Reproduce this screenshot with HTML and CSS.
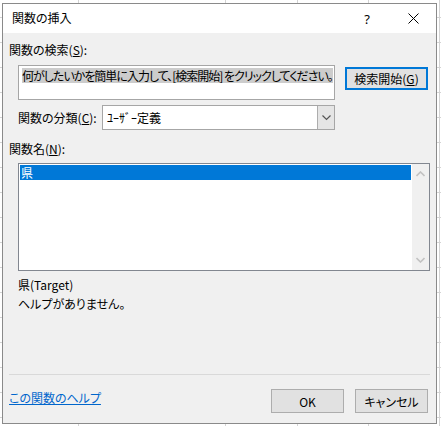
FILE: index.html
```html
<!DOCTYPE html>
<html lang="ja">
<head>
<meta charset="utf-8">
<title>関数の挿入</title>
<link rel="stylesheet" href="styles.css">
</head>
<body>
<div class="dialog">
  <div class="titlebar">
    <span class="title">関数の挿入</span>
    <span class="caption-btn help">?</span>
    <span class="caption-btn close">
      <svg width="11" height="11" viewBox="0 0 11 11"><path d="M0.5 0.5 L10.5 10.5 M10.5 0.5 L0.5 10.5" stroke="#000" stroke-width="1" fill="none"/></svg>
    </span>
  </div>
  <div class="body">
    <div class="label top-label">関数の検索(<u>S</u>):</div>
    <div class="search-row">
      <div class="search-box"><span class="sel">何がしたいかを簡単に入力して、[検索開始] をクリックしてください。</span></div>
      <button class="btn btn-default">検索開始(<u>G</u>)</button>
    </div>
    <div class="cat-row">
      <span class="cat-label">関数の分類(<u>C</u>):</span>
      <div class="select">
        <span class="select-value">ﾕｰｻﾞｰ定義</span>
        <span class="select-btn">
          <svg width="9" height="6" viewBox="0 0 9 6"><path d="M0.5 0.5 L4.5 4.5 L8.5 0.5" stroke="#555" stroke-width="1.2" fill="none"/></svg>
        </span>
      </div>
    </div>
    <div class="label name-label">関数名(<u>N</u>):</div>
    <div class="listbox">
      <div class="list-items">
        <div class="item selected">県</div>
      </div>
      <div class="scrollbar">
        <svg width="9" height="6" viewBox="0 0 9 6"><path d="M0.5 5 L4.5 1 L8.5 5" stroke="#c2c2c2" stroke-width="1.6" fill="none"/></svg>
        <svg width="9" height="6" viewBox="0 0 9 6"><path d="M0.5 1 L4.5 5 L8.5 1" stroke="#c2c2c2" stroke-width="1.6" fill="none"/></svg>
      </div>
    </div>
    <div class="desc">
      <div class="desc-line">県(Target)</div>
      <div class="desc-line">ヘルプがありません。</div>
    </div>
    <div class="sep"></div>
    <div class="footer">
      <a class="link" href="#">この関数のヘルプ</a>
      <div class="buttons">
        <button class="btn">OK</button>
        <button class="btn">キャンセル</button>
      </div>
    </div>
  </div>
</div>
</body>
</html>
```
FILE: styles.css
```css
html, body {
  margin: 0;
  padding: 0;
}
body {
  width: 441px;
  height: 426px;
  overflow: hidden;
  background-color: #ffffff;
  background-image:
    linear-gradient(to right,
      transparent 0, transparent 78px, #d4d4d4 78px, #d4d4d4 79px,
      transparent 79px, transparent 225px, #d4d4d4 225px, #d4d4d4 226px,
      transparent 226px, transparent 297px, #d4d4d4 297px, #d4d4d4 298px,
      transparent 298px, transparent 368px, #d4d4d4 368px, #d4d4d4 369px,
      transparent 369px, transparent 439px, #d4d4d4 439px, #d4d4d4 440px,
      transparent 440px),
    repeating-linear-gradient(to bottom,
      transparent 0, transparent 17px, #d4d4d4 17px, #d4d4d4 18px,
      transparent 18px, transparent 25px);
  font-family: "Noto Sans CJK JP", "Noto Sans", sans-serif;
  font-size: 12px;
  font-feature-settings: "palt";
  color: #000;
  display: flex;
  align-items: flex-start;
}
.dialog {
  box-sizing: border-box;
  margin: 3px 0 0 2px;
  width: 435px;
  height: 421px;
  border: 1px solid #8a8a8a;
  background: #f0f0f0;
  display: flex;
  flex-direction: column;
}
.titlebar {
  height: 29px;
  background: #ffffff;
  display: flex;
  align-items: center;
  flex: none;
}
.title {
  padding-left: 9px;
  line-height: 16px;
  margin-top: -1px;
}
.caption-btn {
  width: 46px;
  height: 29px;
  display: flex;
  align-items: center;
  justify-content: center;
}
.help {
  margin-left: auto;
  font-family: "Noto Sans", sans-serif;
  font-size: 13px;
}
.body {
  flex: 1;
  display: flex;
  flex-direction: column;
  padding: 0 6px;
}
.label {
  line-height: 16px;
  height: 16px;
}
.top-label {
  margin-top: 9px;
}
.search-row {
  margin-top: 7px;
  margin-left: 9px;
  display: flex;
  align-items: flex-start;
}
.search-box {
  box-sizing: border-box;
  flex: none;
  width: 317px;
  height: 35px;
  border: 1px solid #a6a6a6;
  background: #ffffff;
  padding: 2px 0 0 3px;
  line-height: 15px;
  white-space: nowrap;
  overflow: hidden;
}
.sel {
  background: #cccccc;
  display: inline-block;
  line-height: 15px;
  letter-spacing: -1px;
}
.btn {
  box-sizing: border-box;
  font-family: inherit;
  font-size: 12px;
  font-feature-settings: "palt";
  color: #000;
  background: #e1e1e1;
  border: 1px solid #adadad;
  padding: 0;
  margin: 0;
  white-space: nowrap;
}
.btn-default {
  flex: none;
  margin-left: 10px;
  margin-top: 2px;
  width: 83px;
  height: 23px;
  border: 2px solid #0078d7;
}
.cat-row {
  margin-top: 5px;
  margin-left: 9px;
  display: flex;
  align-items: center;
  height: 25px;
}
.cat-label {
  width: 84px;
  line-height: 16px;
}
.select {
  box-sizing: border-box;
  width: 233px;
  height: 25px;
  border: 1px solid #a6a6a6;
  background: #ffffff;
  display: flex;
  align-items: stretch;
}
.select-value {
  flex: 1;
  padding-left: 4px;
  display: flex;
  align-items: center;
}
.select-btn {
  width: 16px;
  background: #e5e5e5;
  border-left: 1px solid #adadad;
  display: flex;
  align-items: center;
  justify-content: center;
}
.name-label {
  margin-top: 11px;
}
.listbox {
  box-sizing: border-box;
  margin-top: 6px;
  margin-left: 9px;
  width: 412px;
  height: 108px;
  border: 1px solid #828790;
  background: #ffffff;
  display: flex;
}
.list-items {
  width: 391px;
  padding: 1px 0 0 1px;
}
.item {
  height: 15px;
  line-height: 15px;
  padding-left: 1px;
}
.selected {
  background: #0078d7;
  color: #ffffff;
}
.scrollbar {
  margin-left: 1px;
  width: 17px;
  background: #f0f0f0;
  display: flex;
  flex-direction: column;
  align-items: center;
  justify-content: space-between;
  padding: 7px 0 7px 0;
  box-sizing: border-box;
}
.desc {
  margin-top: 4px;
  margin-left: 9px;
}
.desc-line {
  height: 19px;
  line-height: 19px;
}
.sep {
  margin-top: auto;
  height: 1px;
  background: #d9d9d9;
}
.footer {
  height: 48px;
  display: flex;
  align-items: flex-start;
  flex: none;
}
.link {
  margin-top: 15px;
  color: #0066cc;
  text-decoration: underline;
  line-height: 16px;
}
.buttons {
  margin-left: auto;
  margin-top: 14px;
  margin-right: 2px;
  display: flex;
  gap: 11px;
}
.buttons .btn {
  width: 73px;
  height: 24px;
}
```
